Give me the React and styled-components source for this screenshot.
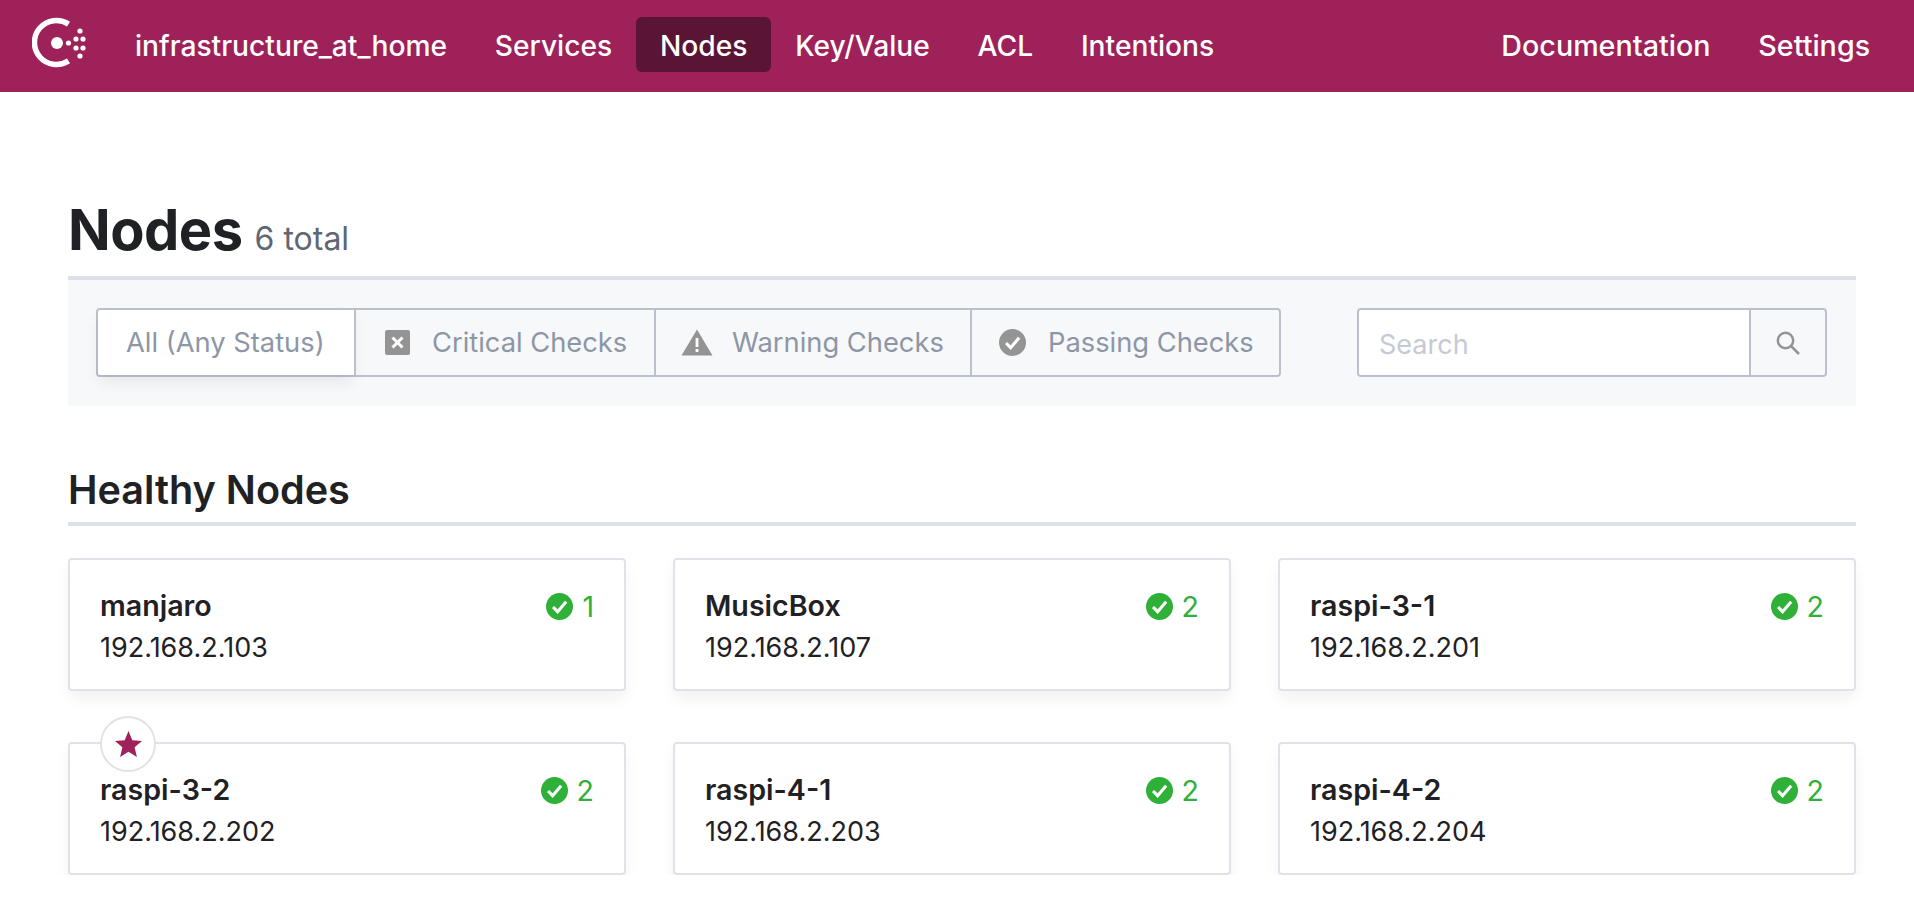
import React from "react";
import styled, { createGlobalStyle } from "styled-components";

const Global = createGlobalStyle`
  html, body { margin: 0; padding: 0; background: #fff; }
  body { font-family: Inter, "Noto Sans", "Liberation Sans", sans-serif; color: #1f2124; overflow: hidden; }
  * { box-sizing: border-box; }
`;

const Header = styled.header`
  height: 92px; background: #9e2159; display: flex; align-items: center; padding: 0 20px 3px 32px;
`;
const Logo = styled.svg`
  width: 60px; height: 60px; flex: none; margin-right: 19px;
`;
const NavGroup = styled.nav`
  display: flex; align-items: center;
  margin-left: ${p => (p.$right ? "auto" : "0")};
  font-size: ${p => (p.$right ? "28.7px" : "28.2px")};
`;
const NavItem = styled.a`
  height: 55px; padding: 2px 23.9px 0; display: flex; align-items: center; border-radius: 6px;
  font-size: inherit; font-weight: 500; color: #fff; white-space: nowrap;
  background: ${p => (p.$active ? "#5a1434" : "transparent")};
`;
const Main = styled.main`
  padding: 103px 58px 0 68px;
`;
const TitleRow = styled.div`
  display: flex; align-items: baseline; gap: 12px; height: 85px; padding-top: 3px; border-bottom: 4px solid #dce0e8;
`;
const Title = styled.h1`
  margin: 0; font-size: 56px; line-height: 64px; font-weight: 700; letter-spacing: -0.5px; color: #1f2124;
`;
const Total = styled.span`
  font-size: 32px; font-weight: 400; color: #5f6674;
`;
const FilterBar = styled.div`
  height: 126px; background: #f7f8fa; padding: 28px 29px 28px 28px; display: flex; justify-content: space-between; align-items: flex-start;
`;
const Segments = styled.div`
  display: flex; height: 69px; border: 2px solid #bac1cc; border-radius: 4px;
`;
const Segment = styled.div`
  display: flex; align-items: center; gap: ${p => p.$gap || 22}px; padding: 0 0 0 ${p => p.$pl || 27}px; width: ${p => p.$w}px;
  font-size: 27.3px; color: #8d96a5; white-space: nowrap;
  border-left: ${p => (p.$first ? "none" : "2px solid #bac1cc")};
  background: ${p => (p.$active ? "#fff" : "transparent")};
  box-shadow: ${p => (p.$active ? "0 8px 16px -2px rgba(31,33,36,0.09)" : "none")};
  border-radius: ${p => (p.$active ? "3px 0 0 3px" : "0")};
`;
const Search = styled.div`
  width: 470px; height: 69px; display: flex; border: 2px solid #bac1cc; border-radius: 4px;
`;
const SearchInput = styled.input`
  flex: 1; min-width: 0; border: 0; outline: 0; background: #fff; padding: 3px 20px 0; font: 400 27px Inter, sans-serif; border-radius: 3px 0 0 3px;
  &::placeholder { color: #c5cad4; opacity: 1; }
`;
const SearchButton = styled.div`
  width: 76px; flex: none; border-left: 2px solid #bac1cc; display: flex; align-items: center; justify-content: center;
`;
const SectionTitle = styled.h2`
  margin: 0; height: 120px; padding-top: 61px; border-bottom: 4px solid #dce0e8;
  font-size: 39.6px; line-height: 46px; font-weight: 600; color: #1f2124;
`;
const Cards = styled.div`
  margin-top: 32px; display: grid; grid-template-columns: 558px 558px 1fr; column-gap: 47px; row-gap: 51px;
`;
const Card = styled.div`
  position: relative; height: 133px; background: #fff; border: 2px solid #dfe3e9; border-radius: 4px;
  box-shadow: 0 8px 16px -2px rgba(31,33,36,0.07); padding: 26px 30px 0 30px;
`;
const CardTop = styled.div`
  display: flex; justify-content: space-between; align-items: center; height: 38px;
`;
const NodeName = styled.div`
  font-size: 28.6px; font-weight: 600; color: #1f2124;
`;
const Health = styled.div`
  display: flex; align-items: center; gap: 9px; padding-top: 2px; font-size: 28.5px; color: #2eb039;
`;
const Address = styled.div`
  margin-top: 5px; font-size: 27px; line-height: 38px; color: #1f2124;
`;
const Leader = styled.div`
  position: absolute; left: 30px; top: -28px; width: 56px; height: 56px; border-radius: 50%;
  background: #fff; border: 2px solid #dfe3e9; display: flex; align-items: center; justify-content: center;
`;

const GRAY = "#949494";

const ConsulLogo = () => (
  <Logo viewBox="0 0 60 60">
    <path d="M36.5 9.1 A22 22 0 1 0 36.5 45.9" fill="none" stroke="#fff" strokeWidth="5.5" />
    <circle cx="25" cy="28" r="6" fill="#fff" />
    <circle cx="36.5" cy="28" r="2.6" fill="#fff" />
    <circle cx="48" cy="16" r="2.6" fill="#fff" />
    <circle cx="44" cy="24" r="2.6" fill="#fff" />
    <circle cx="51" cy="24" r="2.6" fill="#fff" />
    <circle cx="44" cy="33" r="2.6" fill="#fff" />
    <circle cx="51" cy="33" r="2.6" fill="#fff" />
    <circle cx="48" cy="41" r="2.6" fill="#fff" />
  </Logo>
);

const Check = ({ fill, size }) => (
  <svg width={size} height={size} viewBox="0 0 26 26" style={{ flex: "none" }}>
    <circle cx="13" cy="13" r="13" fill={fill} />
    <path d="M6.8 13.5 L11.2 18 L19.4 8.4" fill="none" stroke="#fff" strokeWidth="3" />
  </svg>
);
const CrossSquare = () => (
  <svg width="25" height="25" viewBox="0 0 25 25" style={{ flex: "none" }}>
    <rect width="25" height="25" rx="2" fill={GRAY} />
    <path d="M7.5 7.5 L17.5 17.5 M17.5 7.5 L7.5 17.5" stroke="#fff" strokeWidth="3" />
  </svg>
);
const WarnTriangle = () => (
  <svg width="32" height="27" viewBox="0 0 32 27" style={{ flex: "none" }}>
    <path d="M16 0.5 L31.5 26.5 L0.5 26.5 Z" fill={GRAY} />
    <rect x="14.6" y="9" width="2.8" height="9" fill="#fff" />
    <rect x="14.6" y="20" width="2.8" height="3" fill="#fff" />
  </svg>
);
const SearchIcon = () => (
  <svg width="24" height="24" viewBox="0 0 24 24">
    <circle cx="9.5" cy="9.5" r="7.7" fill="none" stroke={GRAY} strokeWidth="2.5" />
    <path d="M15 15 L23 23" stroke={GRAY} strokeWidth="2.5" />
  </svg>
);
const Star = () => (
  <svg width="27" height="26" viewBox="0 0 27 26">
    <path d="M13.5 0 L17.3 9.2 L27 9.9 L19.6 16.3 L21.9 26 L13.5 20.7 L5.1 26 L7.4 16.3 L0 9.9 L9.7 9.2 Z" fill="#9e2159" />
  </svg>
);

const nodes = [
  { name: "manjaro", ip: "192.168.2.103", n: 1 },
  { name: "MusicBox", ip: "192.168.2.107", n: 2 },
  { name: "raspi-3-1", ip: "192.168.2.201", n: 2 },
  { name: "raspi-3-2", ip: "192.168.2.202", n: 2, leader: true },
  { name: "raspi-4-1", ip: "192.168.2.203", n: 2 },
  { name: "raspi-4-2", ip: "192.168.2.204", n: 2 },
];

export default function App() {
  return (
    <>
      <Global />
      <Header>
        <ConsulLogo />
        <NavGroup>
          <NavItem>infrastructure_at_home</NavItem>
          <NavItem>Services</NavItem>
          <NavItem $active>Nodes</NavItem>
          <NavItem>Key/Value</NavItem>
          <NavItem>ACL</NavItem>
          <NavItem>Intentions</NavItem>
        </NavGroup>
        <NavGroup $right>
          <NavItem>Documentation</NavItem>
          <NavItem>Settings</NavItem>
        </NavGroup>
      </Header>
      <Main>
        <TitleRow>
          <Title>Nodes</Title>
          <Total>6 total</Total>
        </TitleRow>
        <FilterBar>
          <Segments>
            <Segment $first $active $w={256} $pl={28}>All (Any Status)</Segment>
            <Segment $w={300} $pl={29}><CrossSquare />Critical Checks</Segment>
            <Segment $w={316} $pl={25} $gap={19}><WarnTriangle />Warning Checks</Segment>
            <Segment $w={309}><Check fill={GRAY} size={27} />Passing Checks</Segment>
          </Segments>
          <Search>
            <SearchInput placeholder="Search" />
            <SearchButton><SearchIcon /></SearchButton>
          </Search>
        </FilterBar>
        <SectionTitle>Healthy Nodes</SectionTitle>
        <Cards>
          {nodes.map(node => (
            <Card key={node.name}>
              {node.leader && <Leader><Star /></Leader>}
              <CardTop>
                <NodeName>{node.name}</NodeName>
                <Health><Check fill="#2eb039" size={27} />{node.n}</Health>
              </CardTop>
              <Address>{node.ip}</Address>
            </Card>
          ))}
        </Cards>
      </Main>
    </>
  );
}
